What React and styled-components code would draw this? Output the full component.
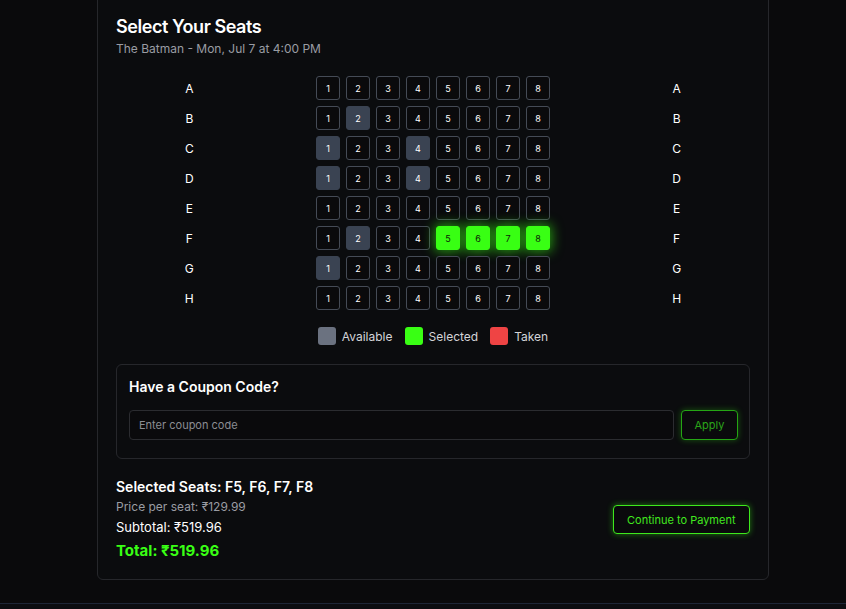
import React from "react";
import styled, { createGlobalStyle } from "styled-components";

const GlobalStyle = createGlobalStyle`
  * { box-sizing: border-box; }
  body {
    margin: 0;
    background: #0a0a0c;
    font-family: Inter, "Noto Sans", sans-serif;
    color: #f5f5f5;
  }
`;

const Page = styled.div`
  min-height: 609px;
  display: flex;
  flex-direction: column;
  align-items: center;
`;

const Card = styled.section`
  width: 672px;
  margin-top: -6px;
  margin-left: 20px;
  padding: 18px 18px 17px;
  background: #0b0c0e;
  border: 1px solid #26272b;
  border-radius: 6px;
  display: flex;
  flex-direction: column;
`;

const Title = styled.h2`
  margin: 0;
  font-size: 18px;
  line-height: 28px;
  font-weight: 600;
  letter-spacing: -0.025em;
  color: #ffffff;
`;

const Subtitle = styled.p`
  margin: 0;
  font-size: 12px;
  line-height: 16px;
  color: #9a9ca3;
`;

const SeatMap = styled.div`
  margin-top: 19px;
  display: flex;
  flex-direction: column;
  gap: 6px;
`;

const Row = styled.div`
  display: flex;
  align-items: center;
  justify-content: space-around;
`;

const RowLabel = styled.span`
  width: 40px;
  text-align: center;
  font-size: 12px;
  color: #ffffff;
`;

const Seats = styled.div`
  display: flex;
  gap: 6px;
`;

const Seat = styled.button`
  width: 24px;
  height: 24px;
  padding: 0;
  border-radius: 3px;
  font-family: inherit;
  font-size: 9px;
  display: flex;
  align-items: center;
  justify-content: center;
  cursor: pointer;
  border: 1px solid
    ${(p) => (p.$state === "selected" ? "#39ff14" : p.$state === "taken" ? "#3a4352" : "#454b56")};
  background: ${(p) => (p.$state === "selected" ? "#39ff14" : p.$state === "taken" ? "#3a4352" : "#0a0a0c")};
  color: ${(p) => (p.$state === "selected" ? "#0b1a05" : "#ffffff")};
  box-shadow: ${(p) => (p.$state === "selected" ? "0 0 12px 2px rgba(57,255,20,0.55)" : "none")};
`;

const Legend = styled.div`
  margin-top: 17px;
  display: flex;
  justify-content: center;
  gap: 12px;
`;

const LegendItem = styled.div`
  display: flex;
  align-items: center;
  gap: 6px;
  font-size: 12px;
  color: #d4d4d8;
`;

const Swatch = styled.span`
  width: 18px;
  height: 18px;
  border-radius: 3px;
  background: ${(p) => p.$color};
`;

const CouponBox = styled.div`
  margin-top: 19px;
  padding: 12px 11px 18px 12px;
  border: 1px solid #26272b;
  border-radius: 6px;
  display: flex;
  flex-direction: column;
  gap: 13px;
`;

const CouponTitle = styled.h3`
  margin: 0;
  font-size: 14px;
  line-height: 20px;
  font-weight: 600;
  color: #ffffff;
`;

const CouponRow = styled.div`
  display: flex;
  gap: 7px;
`;

const CouponInput = styled.input`
  flex: 1;
  height: 30px;
  padding: 0 9px;
  background: #0a0a0c;
  border: 1px solid #2b2c30;
  border-radius: 4px;
  font-family: inherit;
  font-size: 11px;
  color: #e5e5e5;
  &::placeholder {
    color: #8b8d93;
  }
  &:focus {
    outline: none;
  }
`;

const GlowButton = styled.button`
  height: ${(p) => (p.$big ? "29px" : "30px")};
  padding: 0 ${(p) => (p.$big ? "13.5px" : "12.5px")};
  background: #0a0a0c;
  border: ${(p) => (p.$big ? "1.5px solid #3ee81d" : "1px solid #25a514")};
  border-radius: 4px;
  font-family: inherit;
  font-size: 11px;
  color: ${(p) => (p.$big ? "#41e81f" : "#2aa51a")};
  box-shadow: 0 0 6px rgba(57, 255, 20, ${(p) => (p.$big ? 0.45 : 0.3)});
  cursor: pointer;
`;

const Summary = styled.div`
  margin-top: 18px;
  display: flex;
  align-items: center;
  justify-content: space-between;
`;

const Details = styled.div`
  display: flex;
  flex-direction: column;
`;

const SelectedText = styled.div`
  font-size: 14px;
  line-height: 20px;
  font-weight: 600;
  color: #ffffff;
`;

const PriceText = styled.div`
  margin-top: 2px;
  font-size: 12px;
  line-height: 16px;
  color: #9a9ca3;
`;

const SubtotalText = styled.div`
  margin-top: 2px;
  font-size: 13px;
  line-height: 20px;
  color: #ffffff;
`;

const TotalText = styled.div`
  margin-top: 3px;
  font-size: 15px;
  line-height: 22px;
  font-weight: 700;
  color: #39ff14;
`;

const Footer = styled.footer`
  margin-top: auto;
  width: 100%;
  height: 6px;
  border-top: 1px solid #1e2637;
  background: #0c0d11;
`;

const rows = ["A", "B", "C", "D", "E", "F", "G", "H"];
const taken = ["B2", "C1", "C4", "D1", "D4", "F2", "G1"];
const selected = ["F5", "F6", "F7", "F8"];

const seatState = (id) =>
  selected.includes(id) ? "selected" : taken.includes(id) ? "taken" : "available";

export default function App() {
  return (
    <>
      <GlobalStyle />
      <Page>
        <Card>
          <Title>Select Your Seats</Title>
          <Subtitle>The Batman - Mon, Jul 7 at 4:00 PM</Subtitle>

          <SeatMap>
            {rows.map((r) => (
              <Row key={r}>
                <RowLabel>{r}</RowLabel>
                <Seats>
                  {[1, 2, 3, 4, 5, 6, 7, 8].map((n) => (
                    <Seat key={n} $state={seatState(r + n)}>
                      {n}
                    </Seat>
                  ))}
                </Seats>
                <RowLabel>{r}</RowLabel>
              </Row>
            ))}
          </SeatMap>

          <Legend>
            <LegendItem>
              <Swatch $color="#6b7280" />
              Available
            </LegendItem>
            <LegendItem>
              <Swatch $color="#39ff14" />
              Selected
            </LegendItem>
            <LegendItem>
              <Swatch $color="#ef4444" />
              Taken
            </LegendItem>
          </Legend>

          <CouponBox>
            <CouponTitle>Have a Coupon Code?</CouponTitle>
            <CouponRow>
              <CouponInput placeholder="Enter coupon code" />
              <GlowButton>Apply</GlowButton>
            </CouponRow>
          </CouponBox>

          <Summary>
            <Details>
              <SelectedText>Selected Seats: F5, F6, F7, F8</SelectedText>
              <PriceText>Price per seat: ₹129.99</PriceText>
              <SubtotalText>Subtotal: ₹519.96</SubtotalText>
              <TotalText>Total: ₹519.96</TotalText>
            </Details>
            <GlowButton $big>Continue to Payment</GlowButton>
          </Summary>
        </Card>
        <Footer />
      </Page>
    </>
  );
}
